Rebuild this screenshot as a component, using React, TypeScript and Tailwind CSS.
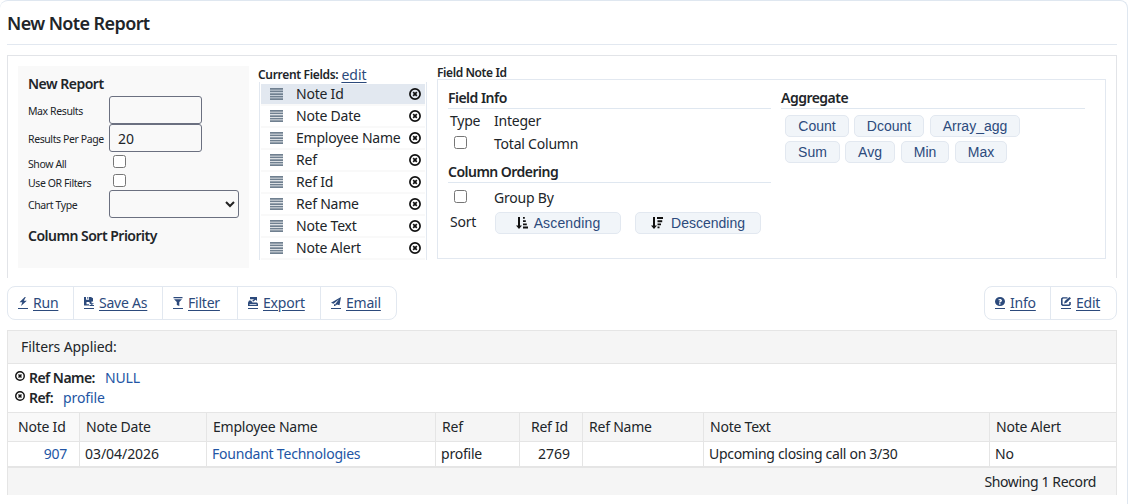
import React from 'react';

const fields = [
  'Note Id',
  'Note Date',
  'Employee Name',
  'Ref',
  'Ref Id',
  'Ref Name',
  'Note Text',
  'Note Alert',
];

const XCircle = ({ className = '' }: { className?: string }) => (
  <svg viewBox="0 0 12 12" className={`shrink-0 ${className}`} fill="none" stroke="#111">
    <circle cx="6" cy="6" r="5.1" strokeWidth="1.7" />
    <path d="M4.2 4.2l3.6 3.6M7.8 4.2l-3.6 3.6" strokeWidth="1.7" />
  </svg>
);

const Bars = () => (
  <svg width="13" height="12" viewBox="0 0 13 12" fill="#708090" className="shrink-0">
    <path d="M0 0h13v1.700H0zM0 2.600h13v1.700H0zM0 5.200h13v1.700H0zM0 7.800h13v1.700H0zM0 10.300h13v1.700H0z" />
  </svg>
);

const SortIcon = ({ desc = false }: { desc?: boolean }) => (
  <svg width="12" height="12" viewBox="0 0 12 12" fill="#111" className="shrink-0">
    <path d="M2 0h2v8.5h2L3 12 0 8.5h2z" />
    {desc ? (
      <path d="M6 0h6v2H6zM6.5 3.3h4.7v1.9H6.5zM6.5 6.5H10v1.8H6.5zM6.5 9.5h2v1.8h-2z" />
    ) : (
      <path d="M7 0h1.8v1.8H7zM7 3.2h2.8v1.9H7zM7 6.5h3.8v1.8H7zM7 9.6h5v1.9H7z" />
    )}
  </svg>
);

const icons: Record<string, React.ReactNode> = {
  Run: <path d="M6.8 0L1.5 5.800h2.800L3 10l5.800-5.700H5.800L7.800 0z" />,
  'Save As': (
    <path
      fillRule="evenodd"
      d="M0 0h2v3h3V0h2l2 1.500V5H7.500v2H10L7.800 9 5.500 7V5.500H2.500V8H5v1.500H0zM3.300 0h1v2h-1zM5.500 9h4.500v1H5.500z"
    />
  ),
  Filter: <path d="M.5 0h9v1.500h-9zM1 2.500h8L6.300 5.500V10L3.800 8.800V5.500z" />,
  Export: (
    <path
      fillRule="evenodd"
      d="M2 0h7v4.500L7.500 3 5.500 5 4 4.500l2-2H2zM1 4h2l1.500 2H9l1 1.500V10H0V6.500zM1.500 8v.8h7V8z"
    />
  ),
  Email: <path fillRule="evenodd" d="M10 0L0 6.500l2.500 1L8 2.500 4.200 8v2L6 8.300l2.500 1zM3 8v2h1V8z" />,
  Info: (
    <path
      fillRule="evenodd"
      d="M5 0a5 5 0 100 10A5 5 0 005 0zM3.200 3C4 1.800 7 1.900 7 4c0 1.500-1.500 1.500-1.500 2.200H4C4 4.800 5.300 4.800 5.300 4c0-.7-.8-.5-1.200 0zM4 7h1.500v1.200H4z"
    />
  ),
  Edit: (
    <g>
      <path d="M6.500 1H1.800L.8 2v6.200l1 1h6.200l1-1V5.500" fill="none" stroke="#2c4a7c" strokeWidth="1.600" />
      <path d="M8.500 0L10 1.500 5.500 6.500 3 7.300l.8-2.800z" />
    </g>
  ),
};

const ToolLink = ({ label, className }: { label: string; className: string }) => (
  <a
    href="#"
    className={`flex items-center border-[#e2e8f0] pl-2.5 text-[#2c4a7c] not-last:border-r ${className}`}
  >
    <span className="mr-[5px] flex h-3 w-2.5 shrink-0 flex-col justify-between border-b border-[#2c4a7c]">
      <svg width="10" height="9" viewBox="0 0 10 10" preserveAspectRatio="none" fill="#2c4a7c">
        {icons[label]}
      </svg>
    </span>
    <span className="underline underline-offset-2">{label}</span>
  </a>
);

const AggButton = ({ label, className }: { label: string; className: string }) => (
  <button
    className={`h-[22px] rounded-[5px] border border-[#e2e8f0] bg-[#f1f5f9] text-center font-['Liberation_Sans',sans-serif] text-sm leading-5 tracking-normal text-[#2c4a7c] ${className}`}
  >
    {label}
  </button>
);

const Check = ({ className = '' }: { className?: string }) => (
  <input type="checkbox" className={`block h-[13px] w-[13px] shrink-0 ${className}`} />
);

const Heading = ({ children, className = '' }: { children: React.ReactNode; className?: string }) => (
  <h3 className={`border-b border-[#dfe7f0] text-sm leading-5 font-semibold tracking-[-0.52px] ${className}`}>
    {children}
  </h3>
);

const ReportSettings = () => (
  <div className="mt-2.5 ml-2.5 h-[202px] w-[231px] shrink-0 bg-[#f9f9f9] pt-2 pl-2.5 text-[10.5px]">
    <h3 className="h-[22px] text-sm leading-5 font-semibold tracking-[-0.5px]">New Report</h3>
    <div className="grid grid-cols-[81px_auto] items-center justify-start tracking-[-0.4px] whitespace-nowrap">
      <label className="pt-0.5">Max Results</label>
      <input className="h-7 w-[93px] rounded-[3px] border border-[#6b7080] px-2 text-sm" />
      <label className="pt-0.5">Results Per Page</label>
      <input
        defaultValue="20"
        className="h-7 w-[93px] rounded-[3px] border border-[#6b7080] px-2 text-sm tracking-normal"
      />
      <label className="h-[19px] leading-6">Show All</label>
      <Check className="ml-1" />
      <label className="h-[19px] leading-6">Use OR Filters</label>
      <Check className="ml-1" />
      <label className="pt-0.5">Chart Type</label>
      <div className="flex h-7 w-[130px] items-center justify-end rounded-[3px] border border-[#6b7080] pr-[3px]">
        <svg width="10" height="7" viewBox="0 0 10 7" fill="none" stroke="#222" strokeWidth="2">
          <path d="M1 1l4 4 4-4" />
        </svg>
      </div>
    </div>
    <h3 className="mt-2 text-sm leading-5 font-semibold tracking-[-0.5px]">Column Sort Priority</h3>
  </div>
);

const FieldList = () => (
  <div className="mt-2.5 ml-[9px] w-[169px] shrink-0">
    <div className="flex h-4 items-center pt-0.5 leading-4">
      <span className="text-xs font-semibold tracking-[-0.32px] whitespace-nowrap">Current Fields:</span>
      <a href="#" className="ml-[3px] tracking-normal text-[#2c4a7c] underline underline-offset-2">
        edit
      </a>
    </div>
    <ul className="ml-px border-x border-[#e2e8f0] px-px pt-0.5">
      {fields.map((name, i) => (
        <li
          key={name}
          className={`flex h-[22px] items-center border-b-2 border-[#f9f9f9] bg-clip-padding pl-[9px] leading-5 ${
            i === 0 ? 'bg-[#e2e8f0]' : ''
          }`}
        >
          <Bars />
          <span className="ml-[13px] flex-1 whitespace-nowrap">{name}</span>
          <XCircle className="mr-1 h-3 w-3" />
        </li>
      ))}
    </ul>
  </div>
);

const FieldDetails = () => (
  <div className="mt-2.5 ml-2.5 w-[669px] shrink-0">
    <div className="h-[13px] text-xs leading-[14px] font-semibold tracking-[-0.4px]">Field Note Id</div>
    <div className="flex h-[180px] border border-[#e2e8f0] px-2.5 pt-2">
      <div className="w-[323px]">
        <Heading className="h-[21px]">Field Info</Heading>
        <div className="grid grid-cols-[44px_auto] pl-0.5 leading-6">
          <span>Type</span>
          <span>Integer</span>
          <Check className="mt-[3px] ml-1" />
          <span className="h-[22px] leading-[22px]">Total Column</span>
        </div>
        <Heading className="mt-[7px] h-[21px]">Column Ordering</Heading>
        <div className="grid grid-cols-[44px_auto] pl-0.5">
          <Check className="mt-[7px] ml-1" />
          <span className="h-7 leading-[30px]">Group By</span>
          <span className="leading-[22px]">Sort</span>
          <div className="mt-px flex gap-3.5 pl-px">
            <button className="flex h-[22px] w-[126px] items-center justify-center gap-1.5 rounded-[5px] border border-[#e2e8f0] bg-[#f1f5f9] font-['Liberation_Sans',sans-serif] tracking-[0.15px] text-[#2c4a7c]">
              <SortIcon />
              Ascending
            </button>
            <button className="flex h-[22px] w-[126px] items-center justify-center gap-2 rounded-[5px] border border-[#e2e8f0] bg-[#f1f5f9] font-['Liberation_Sans',sans-serif] tracking-normal text-[#2c4a7c]">
              <SortIcon desc />
              Descending
            </button>
          </div>
        </div>
      </div>
      <div className="ml-2.5 w-[304px]">
        <Heading className="h-[21px]">Aggregate</Heading>
        <div className="mt-1.5 flex pl-1">
          <AggButton label="Count" className="w-16" />
          <AggButton label="Dcount" className="ml-[5px] w-[70px]" />
          <AggButton label="Array_agg" className="ml-1.5 w-[90px]" />
        </div>
        <div className="mt-1 flex pl-1">
          <AggButton label="Sum" className="w-[55px]" />
          <AggButton label="Avg" className="ml-[5px] w-[50px]" />
          <AggButton label="Min" className="ml-1.5 w-12" />
          <AggButton label="Max" className="ml-1.5 w-[52px]" />
        </div>
      </div>
    </div>
  </div>
);

const AppliedFilter = ({ name, value }: { name: string; value: string }) => (
  <div className="flex h-5 items-center">
    <XCircle className="mb-1 h-2.5 w-2.5" />
    <span className="ml-1 font-semibold tracking-[-0.55px]">{name}:</span>
    <a href="#" className="ml-2.5 tracking-[-0.1px] text-[#2255a4]">
      {value}
    </a>
  </div>
);

const Results = () => (
  <section className="mt-2.5 border-x border-t border-[#e5e5e5]">
    <div className="h-[33px] border-b border-[#e5e5e5] bg-[#f5f5f5] pl-[13px] leading-8 tracking-[-0.1px]">
      Filters Applied:
    </div>
    <div className="h-12 pt-1 pl-[7px]">
      <AppliedFilter name="Ref Name" value="NULL" />
      <AppliedFilter name="Ref" value="profile" />
    </div>
    <table className="w-full table-fixed border-separate border-spacing-0 whitespace-nowrap [&_td]:border-b-2 [&_td]:border-[#e5e5e5] [&_td]:p-0 [&_td]:pl-[5px] [&_th]:border-y [&_th]:border-[#e5e5e5] [&_th]:bg-[#f5f5f5] [&_th]:p-0 [&_th]:pl-1.5 [&_th]:text-left [&_th]:font-normal [&_td:not(:last-child)]:border-r [&_th:not(:last-child)]:border-r">
      <colgroup>
        <col className="w-[72px]" />
        <col className="w-[127px]" />
        <col className="w-[229px]" />
        <col className="w-[84px]" />
        <col className="w-[63px]" />
        <col className="w-[121px]" />
        <col className="w-[286px]" />
        <col />
      </colgroup>
      <thead>
        <tr className="h-[30px]">
          <th className="bg-[#f9f9f9]! pl-2.5!">Note Id</th>
          <th>Note Date</th>
          <th>Employee Name</th>
          <th>Ref</th>
          <th className="pr-[14px]! text-right!">Ref Id</th>
          <th>Ref Name</th>
          <th>Note Text</th>
          <th>Note Alert</th>
        </tr>
      </thead>
      <tbody>
        <tr className="h-[26px]">
          <td className="pr-3! text-right text-[#2255a4]">907</td>
          <td className="tracking-[-0.05px]">03/04/2026</td>
          <td className="text-[#2255a4]">Foundant Technologies</td>
          <td>profile</td>
          <td className="pr-3! text-right tracking-normal">2769</td>
          <td></td>
          <td className="tracking-[-0.3px]">Upcoming closing call on 3/30</td>
          <td>No</td>
        </tr>
      </tbody>
    </table>
    <div className="h-[27px] bg-[#f5f5f5] pr-5 text-right leading-7 tracking-[-0.38px]">Showing 1 Record</div>
  </section>
);

export default function App() {
  return (
    <main className="h-[504px] w-[1128px] overflow-hidden rounded-t-lg border-t border-r border-[#dfe7f0] bg-white pr-2.5 pl-[7px] font-['Noto_Sans',sans-serif] text-sm tracking-[-0.22px] text-[#212529]">
      <h1 className="h-11 border-b border-[#e2e8f0] text-lg leading-[45px] font-semibold tracking-[-0.6px]">
        New Note Report
      </h1>

      <section className="mt-2.5 flex h-[223px] border-x border-t border-[#e2e4e8]">
        <ReportSettings />
        <FieldList />
        <FieldDetails />
      </section>

      <nav className="mt-2 flex h-[34px] justify-between">
        <div className="flex rounded-lg border border-[#e2e8f0]">
          <ToolLink label="Run" className="w-[66px]" />
          <ToolLink label="Save As" className="w-[89px]" />
          <ToolLink label="Filter" className="w-[75px]" />
          <ToolLink label="Export" className="w-[83px]" />
          <ToolLink label="Email" className="w-[75px]" />
        </div>
        <div className="flex rounded-lg border border-[#e2e8f0]">
          <ToolLink label="Info" className="w-[66px]" />
          <ToolLink label="Edit" className="w-[65px]" />
        </div>
      </nav>

      <Results />
    </main>
  );
}
